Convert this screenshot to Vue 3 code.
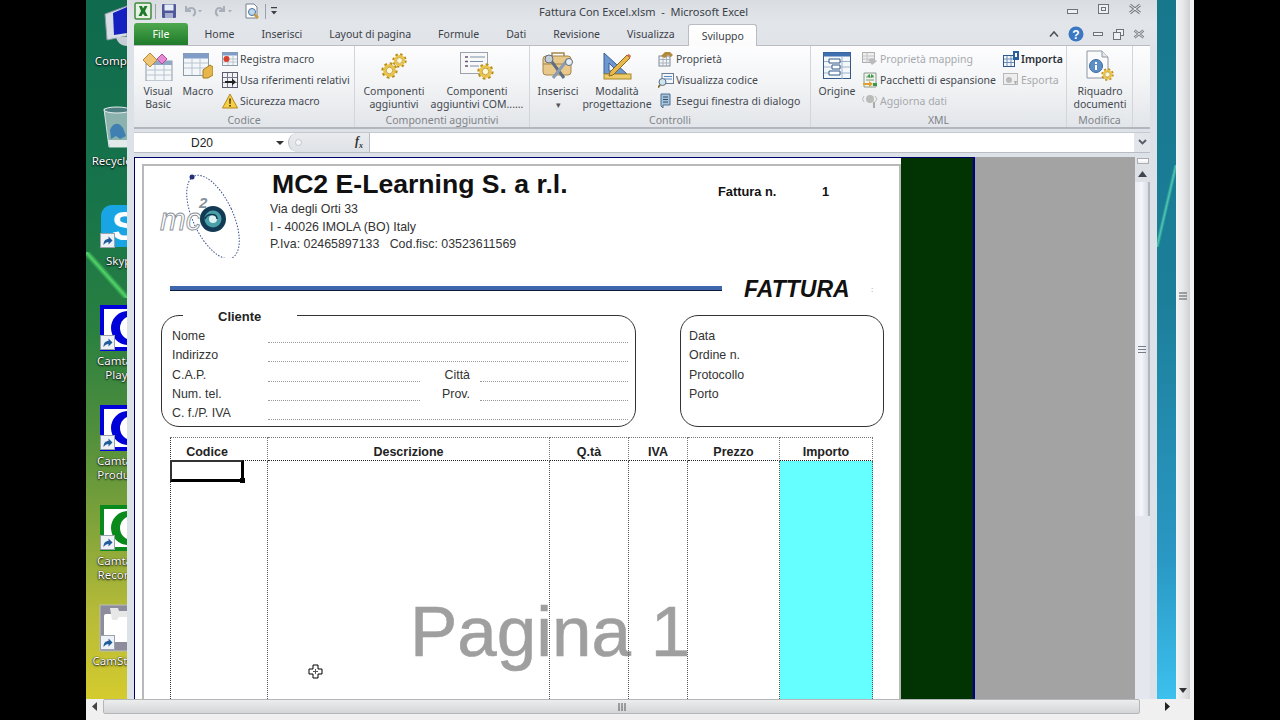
<script setup>
const deskIcons = [
  { kind: 'computer', label: 'Computer' },
  { kind: 'bin', label: 'Recycle Bin' },
  { kind: 'skype', label: 'Skype' },
  { kind: 'camtasia', label: 'Camtasia Player', a: '#0000d8', b: '#0000d8', c: '#c03020' },
  { kind: 'camtasia', label: 'Camtasia Producer', a: '#0000d8', b: '#0000d8', c: '#0000d8' },
  { kind: 'camtasia', label: 'Camtasia Recorder', a: '#0a8a1c', b: '#0a8a1c', c: '#0a8a1c' },
  { kind: 'studio', label: 'CamStudio' },
]

const docTitle = 'Fattura Con Excel.xlsm  -  Microsoft Excel'
const taxLine = 'P.Iva: 02465897133   Cod.fisc: 03523611569'

const tabs = ['Home', 'Inserisci', 'Layout di pagina', 'Formule', 'Dati', 'Revisione', 'Visualizza']

const columns = ['Codice', 'Descrizione', 'Q.tà', 'IVA', 'Prezzo', 'Importo']

const sideLabels = ['Data', 'Ordine n.', 'Protocollo', 'Porto']
</script>

<template>
  <div class="screen">
    <svg class="defs">
      <symbol id="gear" viewBox="0 0 24 24">
        <circle cx="12" cy="12" r="9.5" fill="none" stroke="#b98d1c" stroke-width="4" stroke-dasharray="3.7 3.75" />
        <circle cx="12" cy="12" r="7" fill="none" stroke="#e9c448" stroke-width="4" />
        <circle cx="12" cy="12" r="4.6" fill="#fff8d8" stroke="#a98317" stroke-width="1" />
      </symbol>
      <symbol id="shortcut" viewBox="0 0 15 15">
        <rect x=".5" y=".5" width="14" height="14" fill="#eef2f6" stroke="#9aa3ad" />
        <path d="M3.5 12c0-4 2-6 5-6V3.5l4 4-4 4V9c-2 0-3.500 1-5 3z" fill="#1f5c9c" />
      </symbol>
    </svg>

    <div class="monitor">
      <div class="top">
        <div class="desk-left">
          <div class="desk-col">
            <div v-for="icon in deskIcons" :key="icon.label" class="desk-item">
              <svg class="desk-icon" width="48" height="48" viewBox="0 0 48 48">
                <template v-if="icon.kind === 'computer'">
                  <path d="M6 10 28 2v30L8 36z" fill="#d6dde4" stroke="#8b98a6" />
                  <path d="M14 9 28 3v26L15 31z" fill="#1420c0" />
                  <path d="M17 33h11v9c-6 0-10-4-11-9z" fill="#c7ced6" />
                </template>
                <template v-else-if="icon.kind === 'bin'">
                  <path d="M5 5h26l-3 38H10z" fill="#a9c3c4" fill-opacity=".8" stroke="#d8e6e6" />
                  <ellipse cx="18" cy="6" rx="13" ry="3" fill="#4d7f80" stroke="#e4eeee" />
                  <path d="M11 26c3-8 9-8 13-2l3 8-6 3-4-3-5 3z" fill="#3f7fb2" />
                  <path d="M9 36h20l-1 7H11z" fill="#e2eaea" />
                </template>
                <template v-else-if="icon.kind === 'skype'">
                  <rect x="2" y="1" width="46" height="42" rx="11" fill="#19a5e4" />
                  <text x="26" y="36" font-family="Liberation Sans" font-weight="700" font-size="40" text-anchor="middle" fill="#fff">S</text>
                  <use href="#shortcut" x="1" y="29" width="15" height="15" />
                </template>
                <template v-else-if="icon.kind === 'camtasia'">
                  <rect x="1" y="1" width="46" height="46" :fill="icon.a" />
                  <rect x="5" y="5" width="42" height="38" fill="#fff" />
                  <circle cx="29" cy="24" r="17" :fill="icon.b" />
                  <circle cx="33" cy="24" r="12" fill="#fff" />
                  <circle cx="38" cy="25" r="9" :fill="icon.c" />
                  <use href="#shortcut" x="1" y="31" width="15" height="15" />
                </template>
                <template v-else>
                  <rect x="1" y="1" width="46" height="46" fill="#8c8c9c" stroke="#bbb" />
                  <rect x="5" y="10" width="42" height="28" rx="2" fill="#fff" />
                  <path d="M11 4h8l1 3h8v6h-8l-2 3h-5l-1-6z" fill="#e7e7e7" />
                  <use href="#shortcut" x="1" y="31" width="15" height="15" />
                </template>
              </svg>
              <div class="desk-label">{{ icon.label }}</div>
            </div>
          </div>
        </div>

        <div class="excel">
          <div class="titlebar">
            <div class="qat">
              <svg width="18" height="18" viewBox="0 0 18 18">
                <rect x="1" y="1" width="16" height="16" rx="1.500" fill="#e8f2e4" stroke="#3d8a3b" stroke-width="1.500" />
                <path d="M5 4h3l1 2.500L10.500 4h3L11 9l2.700 5h-3L9 11.500 7.500 14h-3L7 9z" fill="#1f7a2a" />
              </svg>
              <span class="qat-sep sep-a"></span>
              <svg class="q-save" width="16" height="16" viewBox="0 0 16 16">
                <rect x="1" y="1" width="14" height="14" rx="1" fill="#50589a" />
                <rect x="3.500" y="1.500" width="9" height="6" fill="#e4ecf6" />
                <rect x="4" y="10" width="8" height="5" fill="#a6aed0" />
              </svg>
              <svg class="q-undo" width="20" height="16" viewBox="0 0 20 16">
                <path d="M3 3v5h5M3.500 8C6 4 11 4 12 8c.5 2-.5 4-2 5" fill="none" stroke="#a9afb8" stroke-width="2" />
                <path d="M15 7h4l-2 2.500z" fill="#a9afb8" />
              </svg>
              <svg class="q-redo" width="20" height="16" viewBox="0 0 20 16">
                <path d="M11 3v5H6M10.500 8C8 4 4 4 3 8c-.5 2 .5 4 2 5" fill="none" stroke="#a9afb8" stroke-width="2" />
                <path d="M15 7h4l-2 2.500z" fill="#a9afb8" />
              </svg>
              <svg class="q-view" width="16" height="17" viewBox="0 0 16 17">
                <path d="M2 1h8l3 3v11H2z" fill="#fff" stroke="#76808c" />
                <circle cx="8" cy="9" r="3.500" fill="#bcd8ef" stroke="#4a6f96" />
                <path d="m10.500 11.500 3.500 3.500" stroke="#c79a3a" stroke-width="2.500" />
              </svg>
              <span class="qat-sep sep-b"></span>
              <svg class="q-more" width="6" height="10" viewBox="0 0 6 10">
                <path d="M0 1h6v1.200H0zM0 5h6L3 8.500z" fill="#3c4148" />
              </svg>
            </div>
            <div class="doc-title">{{ docTitle }}</div>
            <div class="win-btns">
              <svg width="14" height="12" viewBox="0 0 14 12"><rect x="1.500" y="6.500" width="10" height="4" fill="#eef0f3" stroke="#6d737b" /></svg>
              <svg width="14" height="12" viewBox="0 0 14 12"><rect x="1.500" y="1.500" width="10" height="9" fill="#eef0f3" stroke="#6d737b" /><rect x="4.500" y="4.500" width="4" height="3" fill="none" stroke="#6d737b" /></svg>
              <svg width="14" height="12" viewBox="0 0 14 12"><path d="m2 2 10 8M12 2 2 10" stroke="#7a8088" stroke-width="3" /><path d="m2 2 10 8M12 2 2 10" stroke="#f2f3f5" stroke-width="1" /></svg>
            </div>
          </div>

          <div class="tabbar">
            <div class="tab-file">File</div>
            <div v-for="tab in tabs" :key="tab" class="tab">{{ tab }}</div>
            <div class="tab tab-active">Sviluppo</div>
            <div class="tab-btns">
              <svg width="10" height="8" viewBox="0 0 10 8"><path d="M1 6.500 5 2l4 4.500" fill="none" stroke="#4c5158" stroke-width="1.500" /></svg>
              <svg width="16" height="16" viewBox="0 0 16 16">
                <circle cx="8" cy="8" r="7.500" fill="#3b78c4" />
                <text x="8" y="12.500" font-family="Liberation Sans" font-weight="700" font-size="12" text-anchor="middle" fill="#fff">?</text>
              </svg>
              <svg width="11" height="8" viewBox="0 0 11 8"><rect x=".5" y="2.500" width="9" height="3" fill="#eef0f3" stroke="#6d737b" /></svg>
              <svg width="11" height="11" viewBox="0 0 11 11"><rect x="3.500" y=".5" width="7" height="6" fill="#eef0f3" stroke="#6d737b" /><rect x=".5" y="3.500" width="7" height="7" fill="#eef0f3" stroke="#6d737b" /></svg>
              <svg width="12" height="10" viewBox="0 0 12 10"><path d="m1.500 1.500 9 7M10.500 1.500l-9 7" stroke="#7a8088" stroke-width="2.600" /><path d="m1.500 1.500 9 7M10.500 1.500l-9 7" stroke="#f2f3f5" stroke-width=".8" /></svg>
            </div>
          </div>

          <div class="ribbon">
            <section class="group g-codice">
              <div class="group-body">
                <div class="big vb">
                  <div class="big-icon">
                    <svg width="32" height="30" viewBox="0 0 32 30">
                      <rect x="4" y="10" width="26" height="20" fill="#f4f7fa" stroke="#8d9aa8" />
                      <rect x="4" y="10" width="26" height="4" fill="#8fa7c4" />
                      <path d="M4 19h26M4 24h26M13 14v16M22 14v16" stroke="#b9c4d0" />
                      <path d="m1 9 7-7 7 7-7 7z" fill="#eec675" stroke="#b68a33" />
                      <path d="m15 8 5-5 5 5-5 5z" fill="#e689d6" stroke="#a94f9c" />
                    </svg>
                  </div>
                  <div class="big-text">Visual<br />Basic</div>
                </div>
                <div class="big macro">
                  <div class="big-icon">
                    <svg width="30" height="26" viewBox="0 0 30 26">
                      <rect x=".5" y=".5" width="25" height="22" fill="#f4f7fa" stroke="#8d9aa8" />
                      <rect x=".5" y=".5" width="25" height="5" fill="#7f9dc6" />
                      <path d="M1 10h24M1 15h24M9 6v16M17 6v16" stroke="#b9c4d0" />
                      <path d="M20 25V17l7-5 3 2v8l-5 3z" fill="#e6b64a" stroke="#a67d20" />
                    </svg>
                  </div>
                  <div class="big-text">Macro</div>
                </div>
                <div class="small-col col-codice">
                  <div class="small">
                    <svg width="16" height="16" viewBox="0 0 16 16">
                      <rect x=".5" y="1.500" width="15" height="13" fill="#f4f7fa" stroke="#8d9aa8" />
                      <rect x=".5" y="1.500" width="15" height="3" fill="#7f9dc6" />
                      <path d="M1 8h14M1 11h14M6 5v9M11 5v9" stroke="#b9c4d0" />
                      <circle cx="4.500" cy="8" r="3" fill="#d8402c" />
                    </svg>
                    <span>Registra macro</span>
                  </div>
                  <div class="small">
                    <svg width="16" height="16" viewBox="0 0 16 16">
                      <rect x=".5" y=".5" width="15" height="15" fill="#f2f2f6" stroke="#5a5a68" />
                      <path d="M1 5.500h14M1 10.500h14M5.500 1v14M10.500 1v14" stroke="#77778a" />
                      <path d="M3 9h7V6.500L14 10l-4 3.500V11H3z" fill="#222" />
                    </svg>
                    <span>Usa riferimenti relativi</span>
                  </div>
                  <div class="small">
                    <svg width="16" height="16" viewBox="0 0 16 16">
                      <path d="M8 1 15.500 15H.5z" fill="#f5cf45" stroke="#b5891c" />
                      <path d="M7.200 5.500h1.600l-.3 5.500h-1zM7.200 12h1.600v1.500H7.200z" fill="#3a2c08" />
                    </svg>
                    <span>Sicurezza macro</span>
                  </div>
                </div>
              </div>
              <div class="group-label">Codice</div>
            </section>

            <section class="group g-comp">
              <div class="group-body">
                <div class="big comp1">
                  <div class="big-icon">
                    <svg width="26" height="26" viewBox="0 0 26 26">
                      <use href="#gear" x="0" y="9" width="17" height="17" />
                      <use href="#gear" x="11" y="0" width="15" height="15" />
                    </svg>
                  </div>
                  <div class="big-text">Componenti<br />aggiuntivi</div>
                </div>
                <div class="big comp2">
                  <div class="big-icon">
                    <svg width="34" height="28" viewBox="0 0 34 28">
                      <rect x=".5" y=".5" width="27" height="21" fill="#f8f8f8" stroke="#9aa3ad" />
                      <path d="M5 5h3M5 9.500h3M5 14h3" stroke="#657" stroke-width="1.500" />
                      <path d="M10 5h15M10 9.500h13M10 14h9" stroke="#7890a8" />
                      <use href="#gear" x="17" y="11" width="17" height="17" />
                    </svg>
                  </div>
                  <div class="big-text">Componenti<br />aggiuntivi COM......</div>
                </div>
              </div>
              <div class="group-label">Componenti aggiuntivi</div>
            </section>

            <section class="group g-ctrl">
              <div class="group-body">
                <div class="big ins">
                  <div class="big-icon">
                    <svg width="32" height="30" viewBox="0 0 32 30">
                      <path d="M10 6V2h12v4" fill="none" stroke="#a8854c" stroke-width="1.500" />
                      <rect x="1" y="5" width="28" height="19" rx="3" fill="#e8c98a" stroke="#a8854c" />
                      <path d="M1 13h28" stroke="#a8854c" />
                      <path d="m7 7 15 20" stroke="#5f6e82" stroke-width="3" />
                      <path d="M26 8 11 27" stroke="#8b9cb2" stroke-width="3" />
                      <circle cx="7" cy="8" r="4" fill="#c4ced9" stroke="#5f6e82" />
                      <circle cx="27" cy="11" r="3.500" fill="#e8edf2" stroke="#5f6e82" />
                    </svg>
                  </div>
                  <div class="big-text">Inserisci<br /><span class="drop">▾</span></div>
                </div>
                <div class="big mode">
                  <div class="big-icon">
                    <svg width="30" height="28" viewBox="0 0 30 28">
                      <path d="M2 1v21h23z" fill="#6d97d0" stroke="#3a5f94" />
                      <path d="M7 11v8h8z" fill="#eaf1f9" stroke="#3a5f94" />
                      <rect x="2" y="22" width="27" height="5" fill="#eccb68" stroke="#a9862b" />
                      <path d="M8 20 25 3l3 3-17 17-4 1z" fill="#e8b84c" stroke="#8a6a1c" />
                      <path d="m25 3 3 3 1-2-2-2z" fill="#d76a5a" />
                    </svg>
                  </div>
                  <div class="big-text">Modalità<br />progettazione</div>
                </div>
                <div class="small-col col-ctrl">
                  <div class="small">
                    <svg width="16" height="16" viewBox="0 0 16 16">
                      <rect x="1" y="5" width="11" height="10" fill="#f3f5f8" stroke="#7c8794" />
                      <path d="M1 8.500h11M1 12h11M5 5v10M8.500 5v10" stroke="#aab3bd" />
                      <path d="m3 5 4-4h5l3 3-2 2-3-2-3 3z" fill="#b08a3c" />
                    </svg>
                    <span>Proprietà</span>
                  </div>
                  <div class="small">
                    <svg width="16" height="16" viewBox="0 0 16 16">
                      <rect x="4" y="1.500" width="11.500" height="10" fill="#f3f6fa" stroke="#6a7b90" />
                      <path d="M6 4.500h8M6 7h8" stroke="#5a88bd" />
                      <circle cx="4.500" cy="10" r="3.500" fill="#cfe4f3" stroke="#5d6d7e" />
                      <path d="m2 13-2 2.500" stroke="#8a6a2c" stroke-width="2" />
                    </svg>
                    <span>Visualizza codice</span>
                  </div>
                  <div class="small">
                    <svg width="16" height="16" viewBox="0 0 16 16">
                      <path d="M3 1h9v11H5v3L3 13z" fill="#a8c4dc" stroke="#4f6f8f" />
                      <path d="M5 4h5M5 6.500h5M5 9h5" stroke="#2f4f6f" />
                    </svg>
                    <span>Esegui finestra di dialogo</span>
                  </div>
                </div>
              </div>
              <div class="group-label">Controlli</div>
            </section>

            <section class="group g-xml">
              <div class="group-body">
                <div class="big orig">
                  <div class="big-icon">
                    <svg width="28" height="28" viewBox="0 0 28 28">
                      <rect x=".5" y=".5" width="27" height="26" fill="#f4f7fa" stroke="#33588a" />
                      <rect x=".5" y=".5" width="27" height="4" fill="#3f6fb0" />
                      <path d="M1 9.500h26M1 15h26M1 21h26M19 5v22" stroke="#9fb2c8" />
                      <path d="M6 7h11v4H6zM9 13h8v4H9zM6 19h11v4H6z" fill="#fff" stroke="#33588a" />
                    </svg>
                  </div>
                  <div class="big-text">Origine</div>
                </div>
                <div class="small-col col-xml1">
                  <div class="small off">
                    <svg width="16" height="16" viewBox="0 0 16 16">
                      <rect x=".5" y="1.500" width="12" height="10" fill="#eee" stroke="#b0b0b0" />
                      <path d="M1 5h11M1 8h11M5 2v9" stroke="#c4c4c4" />
                      <path d="m6 9 4-2 5 3-5 4z" fill="#bbb" />
                    </svg>
                    <span>Proprietà mapping</span>
                  </div>
                  <div class="small">
                    <svg width="16" height="16" viewBox="0 0 16 16">
                      <path d="M2 1h12v14H2z" fill="#f0f3f0" stroke="#8a9a8a" />
                      <path d="M4 5h8M4 8h8" stroke="#7a9a7a" />
                      <path d="M8 2 5 4l3 2zM9 2l3 2-3 2z" fill="#3a9a4a" />
                      <path d="M1 11h6V9l4 3-4 3v-2H1z" fill="#e0a030" />
                      <path d="M15 11h-4v3h4z" fill="#3a9a4a" />
                    </svg>
                    <span>Pacchetti di espansione</span>
                  </div>
                  <div class="small off">
                    <svg width="16" height="16" viewBox="0 0 16 16">
                      <circle cx="8" cy="6" r="4" fill="#bbb" />
                      <path d="M2 3 .5 6 2 9M13 3l2 3-2 3" fill="none" stroke="#bbb" />
                      <path d="M12 9v6" stroke="#aaa" stroke-width="2" />
                    </svg>
                    <span>Aggiorna dati</span>
                  </div>
                </div>
                <div class="small-col col-xml2">
                  <div class="small strong">
                    <svg width="16" height="16" viewBox="0 0 16 16">
                      <rect x=".5" y="4.500" width="11" height="11" fill="#f4f7fa" stroke="#33588a" />
                      <path d="M1 8h10M1 11.500h10M4 5v10M8 5v10" stroke="#6f8fb5" />
                      <rect x="10" y="0" width="6" height="9" fill="#2a5f9c" />
                      <path d="M12 2h2v4h-2z" fill="#fff" />
                    </svg>
                    <span>Importa</span>
                  </div>
                  <div class="small off">
                    <svg width="16" height="16" viewBox="0 0 16 16">
                      <rect x=".5" y="1.500" width="14" height="11" fill="#eee" stroke="#b8b8b8" />
                      <circle cx="6" cy="8" r="3" fill="#bbb" />
                      <path d="M11 9h3l-1.500 4z" fill="#aaa" />
                    </svg>
                    <span>Esporta</span>
                  </div>
                </div>
              </div>
              <div class="group-label">XML</div>
            </section>

            <section class="group g-mod">
              <div class="group-body">
                <div class="big doc">
                  <div class="big-icon">
                    <svg width="30" height="31" viewBox="0 0 30 31">
                      <path d="M2 1h15l6 6v21H2z" fill="#fbfbfc" stroke="#8d97a3" />
                      <path d="M17 1v6h6" fill="#e6e9ee" stroke="#8d97a3" />
                      <circle cx="11" cy="16" r="6.500" fill="#5d8ec6" stroke="#3c6aa0" />
                      <path d="M10 12h2v2h-2zM10 15h2v5h-2z" fill="#fff" />
                      <use href="#gear" x="16" y="18" width="13" height="13" />
                    </svg>
                  </div>
                  <div class="big-text">Riquadro<br />documenti</div>
                </div>
              </div>
              <div class="group-label">Modifica</div>
            </section>
          </div>

          <div class="formula">
            <div class="namebox">
              <span class="cell-ref">D20</span>
              <span class="name-arrow"></span>
            </div>
            <div class="fx-box">
              <span class="fx-dot"></span>
              <span class="fx">f<sub>x</sub></span>
            </div>
            <div class="formula-input"></div>
            <div class="formula-expand">
              <svg width="9" height="7" viewBox="0 0 9 7"><path d="m1 1 3.500 3.500L8 1" fill="none" stroke="#555c66" stroke-width="1.800" /></svg>
            </div>
          </div>

          <div class="sheet">
            <div class="work">
              <div class="paper">
                <div class="page">
                  <div class="head">
                    <svg class="logo" width="84" height="86" viewBox="0 0 84 86">
                      <ellipse cx="55" cy="45" rx="20" ry="45" transform="rotate(-25 55 45)" fill="none" stroke="#3a4f8a" stroke-dasharray="1.500 1.500" />
                      <circle cx="34" cy="5" r="2.500" fill="#20307a" />
                      <text x="2" y="58" font-family="Liberation Sans" font-style="italic" font-size="31" fill="#fff" stroke="#8a8f98" stroke-width=".9">mc</text>
                      <text x="41" y="36" font-family="Liberation Sans" font-weight="700" font-style="italic" font-size="15" fill="#87919e">2</text>
                      <circle cx="55" cy="47" r="13" fill="#123a54" />
                      <circle cx="55" cy="47" r="8.500" fill="#4aa0a8" />
                      <circle cx="55" cy="47" r="4" fill="#dff2f2" />
                      <path d="M47 47c2-6 12-6 12 0" fill="none" stroke="#123a54" stroke-width="1.500" />
                    </svg>
                    <div class="company">
                      <div class="company-name">MC2 E-Learning S. a r.l.</div>
                      <div class="company-line">Via degli Orti 33</div>
                      <div class="company-line">I - 40026 IMOLA (BO) Italy</div>
                      <div class="company-line">{{ taxLine }}</div>
                    </div>
                    <div class="invoice-no">
                      <span class="invoice-key">Fattura n.</span>
                      <span>1</span>
                    </div>
                  </div>

                  <div class="title-row">
                    <div class="rule"></div>
                    <div class="doc-kind">FATTURA</div>
                    <div class="mini-dots">:</div>
                  </div>

                  <div class="boxes">
                    <div class="box client">
                      <div class="legend">Cliente</div>
                      <div class="client-grid">
                        <span>Nome</span><span class="line wide"></span>
                        <span>Indirizzo</span><span class="line wide"></span>
                        <span>C.A.P.</span><span class="line"></span><span class="right">Città</span><span></span><span class="line"></span>
                        <span>Num. tel.</span><span class="line"></span><span class="right">Prov.</span><span></span><span class="line"></span>
                        <span>C. f./P. IVA</span><span class="line wide"></span>
                      </div>
                    </div>
                    <div class="box side">
                      <div v-for="label in sideLabels" :key="label" class="side-row">{{ label }}</div>
                    </div>
                  </div>

                  <div class="items">
                    <div class="items-head">
                      <div v-for="col in columns" :key="col" class="head-cell">{{ col }}</div>
                    </div>
                    <div class="items-body">
                      <div v-for="col in columns" :key="col" class="body-cell" :class="{ cyan: col === 'Importo' }"></div>
                    </div>
                    <div class="selected"><span class="handle"></span></div>
                  </div>

                  <div class="watermark">Pagina 1</div>
                  <svg class="cursor" width="15" height="15" viewBox="0 0 15 15">
                    <path d="M5 1h5v4h4v5h-4v4H5v-4H1V5h4z" fill="#fff" stroke="#000" />
                    <path d="M7.500 5v5M5 7.500h5" stroke="#555" />
                  </svg>
                </div>
              </div>
              <div class="band-green"></div>
              <div class="band-navy"></div>
            </div>
            <div class="vscroll">
              <div class="split"><span></span></div>
              <div class="up">
                <svg width="9" height="6" viewBox="0 0 9 6"><path d="M0 6h9L4.500 0z" fill="#3f4650" /></svg>
              </div>
              <div class="v-thumb">
                <svg width="8" height="7" viewBox="0 0 8 7"><path d="M0 .5h8M0 3.500h8M0 6.500h8" stroke="#777e88" /></svg>
              </div>
            </div>
          </div>
        </div>

        <div class="desk-right"></div>

        <div class="outer-scroll">
          <div class="outer-thumb">
            <svg width="8" height="9" viewBox="0 0 8 9"><path d="M0 1h8M0 4h8M0 7h8" stroke="#555" /></svg>
          </div>
          <svg class="outer-down" width="8" height="5" viewBox="0 0 8 5"><path d="M0 0h8L4 5z" fill="#333" /></svg>
        </div>
      </div>

      <div class="hbar">
        <div class="hscroll">
          <svg width="5" height="9" viewBox="0 0 5 9"><path d="M5 0v9L0 4.500z" fill="#444" /></svg>
          <div class="h-thumb">
            <svg width="8" height="8" viewBox="0 0 8 8"><path d="M1 0v8M4 0v8M7 0v8" stroke="#555" /></svg>
          </div>
          <svg class="h-right" width="5" height="9" viewBox="0 0 5 9"><path d="M0 0v9l5-4.500z" fill="#222" /></svg>
        </div>
      </div>
    </div>
  </div>
</template>

<style>
html,
body {
  margin: 0;
  background: #000;
  overflow: hidden;
}
</style>

<style scoped>
.screen {
  width: 1280px;
  height: 720px;
  padding: 0 86px;
  box-sizing: border-box;
  background: #000;
  overflow: hidden;
  font-family: "Noto Sans", "Liberation Sans", sans-serif;
}
.defs {
  display: block;
  width: 0;
  height: 0;
}
.monitor {
  width: 1108px;
  height: 720px;
  display: flex;
  flex-direction: column;
}
.top {
  display: flex;
  height: 699px;
}

/* desktop */
.desk-left {
  width: 41px;
  overflow: hidden;
  background:
    linear-gradient(to top right, transparent 44%, rgba(90, 230, 110, .85) 50%, transparent 56%) 0 252px / 41px 46px no-repeat,
    linear-gradient(#0f6a4e 0, #17744a 200px, #2a8040 330px, #4f8e3c 430px, #7da23a 520px, #b5ba38 610px, #d4cb2e 699px);
}
.desk-col {
  width: 72px;
}
.desk-item {
  height: 96px;
  padding-top: 4px;
  text-align: center;
}
.desk-icon {
  display: block;
  margin-left: 13px;
}
.desk-label {
  margin-top: 2px;
  font-size: 11.5px;
  line-height: 14px;
  color: #fff;
  text-shadow: 0 1px 2px #000, 0 0 1px #000;
}
.desk-right {
  width: 19px;
  background:
    linear-gradient(to top left, transparent 44%, rgba(90, 220, 180, .8) 50%, transparent 56%) 0 165px / 19px 82px no-repeat,
    linear-gradient(#17788c 0, #1c7f9a 300px, #2a98c4 560px, #3cc0ee 699px);
}
.outer-scroll {
  width: 14px;
  padding-right: 4px;
  background: linear-gradient(90deg, #f4f5f6 0, #e6e7e9 7px, #cfd1d3 14px, #f2f2f2 14px);
  display: flex;
  flex-direction: column;
  align-items: center;
}
.outer-thumb {
  height: 592px;
  display: flex;
  align-items: center;
  justify-content: center;
}
.outer-down {
  margin-top: 96px;
}

/* bottom scroll bar */
.hbar {
  height: 21px;
  background: #f0f0f1;
}
.hscroll {
  height: 15px;
  display: flex;
  align-items: center;
  padding-left: 6px;
  box-sizing: border-box;
}
.h-thumb {
  width: 1037px;
  height: 15px;
  margin-left: 6px;
  box-sizing: border-box;
  background: linear-gradient(#eceded, #d4d5d7);
  border: 1px solid #b4b6b9;
  border-radius: 2px;
  display: flex;
  align-items: center;
  justify-content: center;
}
.h-right {
  margin-left: 25px;
}

/* excel window */
.excel {
  width: 1016px;
  padding: 0 7px;
  background: #dde2e8;
  display: flex;
  flex-direction: column;
}
.titlebar {
  height: 22px;
  display: flex;
  align-items: center;
  background: linear-gradient(#d9dde2, #e2e5e9);
  margin: 0 -7px;
  padding: 0 7px;
}
.qat {
  width: 405px;
  display: flex;
  align-items: center;
  box-sizing: border-box;
}
.qat-sep {
  width: 1px;
  height: 15px;
  background: #9aa0a8;
}
.sep-a { margin-left: 3px; }
.q-save { margin-left: 5px; }
.q-undo { margin-left: 6px; }
.q-redo { margin-left: 10px; }
.q-view { margin-left: 11px; }
.sep-b { margin-left: 5px; }
.q-more { margin-left: 5px; }
.doc-title {
  font-size: 11px;
  color: #3a3f46;
  white-space: pre;
}
.win-btns {
  margin-left: auto;
  display: flex;
  gap: 17px;
  padding: 0 8px 4px 0;
}
.tabbar {
  height: 23px;
  display: flex;
  align-items: flex-end;
  background: linear-gradient(#e2e5e9, #e0e3e7);
  margin: 0 -7px;
  padding: 0 7px;
  font-size: 10.5px;
  color: #3c4148;
}
.tab-file {
  width: 54px;
  height: 22px;
  margin-right: 3px;
  border-radius: 3px 3px 0 0;
  background: linear-gradient(#4ea84f, #1f7a2a);
  color: #fff;
  font-size: 10.5px;
  line-height: 22px;
  text-align: center;
}
.tab {
  height: 22px;
  padding: 0 13.5px;
  line-height: 22px;
}
.tab-active {
  margin-left: 0;
  background: linear-gradient(#fff, #fbfbfc);
  border: 1px solid #b9bdc3;
  border-bottom: 0;
  border-radius: 3px 3px 0 0;
  box-sizing: border-box;
  padding: 0 12.5px;
  position: relative;
  top: 1px;
}
.tab-btns {
  margin-left: auto;
  height: 22px;
  display: flex;
  align-items: center;
  gap: 9px;
  padding-right: 5px;
}
.ribbon {
  height: 84px;
  box-sizing: border-box;
  display: flex;
  background: linear-gradient(#fdfdfe 0, #f3f4f6 45%, #e2e5e9 100%);
  border-top: 1px solid #b9bdc3;
  border-bottom: 2px solid #b3b7bd;
  font-size: 10.5px;
  color: #444950;
}
.group {
  box-sizing: border-box;
  border-right: 1px solid #d2d5da;
  display: flex;
  flex-direction: column;
}
.g-codice { width: 221px; }
.g-comp { width: 175px; }
.g-ctrl { width: 281px; }
.g-xml { width: 256px; }
.g-mod { width: 66px; }
.group-body {
  height: 66px;
  display: flex;
}
.group-label {
  height: 15px;
  line-height: 17px;
  text-align: center;
  color: #808489;
}
.big {
  text-align: center;
  flex: none;
}
.big-icon {
  height: 39px;
  display: flex;
  align-items: center;
  justify-content: center;
}
.big-icon svg {
  display: block;
}
.big-text {
  line-height: 13px;
  white-space: nowrap;
}
.drop {
  font-size: 9px;
  color: #555;
}
.vb { width: 34px; margin-left: 7px; }
.macro { width: 32px; margin-left: 7px; }
.comp1 { width: 66px; margin-left: 6px; }
.comp2 { width: 96px; margin-left: 2px; }
.ins { width: 44px; margin-left: 6px; }
.mode { width: 72px; margin-left: 1px; }
.orig { width: 40px; margin-left: 6px; }
.doc { width: 66px; }
.small-col {
  padding-top: 2px;
  flex: none;
}
.col-codice { margin-left: 8px; }
.col-ctrl { margin-left: 5px; }
.col-xml1 { width: 141px; margin-left: 5px; }
.col-xml2 { margin-left: 0; }
.small {
  height: 21px;
  display: flex;
  align-items: center;
  gap: 2px;
  white-space: nowrap;
}
.off {
  color: #a6a9ad;
}
.strong {
  color: #2c3036;
  font-weight: 600;
}

/* formula bar */
.formula {
  height: 21px;
  margin-top: 3px;
  display: flex;
  background: #fff;
  box-sizing: border-box;
  border-top: 1px solid #c6cad0;
  border-bottom: 1px solid #b9bdc3;
}
.namebox {
  width: 154px;
  position: relative;
  font-family: "Liberation Sans", sans-serif;
  font-size: 12px;
  line-height: 21px;
  padding-left: 57px;
  box-sizing: border-box;
  color: #222;
}
.name-arrow {
  position: absolute;
  left: 142px;
  top: 8px;
  border: 4px solid transparent;
  border-top: 4px solid #333;
  border-bottom: 0;
}
.fx-box {
  width: 82px;
  background: linear-gradient(#e9ebee, #dfe2e6);
  border-radius: 10px 0 0 10px;
  border-left: 1px solid #b9bdc3;
  border-right: 1px solid #b9bdc3;
  box-sizing: border-box;
  display: flex;
  align-items: center;
  justify-content: space-between;
  padding: 0 6px 0 6px;
}
.fx-dot {
  width: 5px;
  height: 5px;
  border-radius: 50%;
  background: #f5f6f7;
  border: 1px solid #c2c6cb;
}
.fx {
  font-family: "Liberation Serif", serif;
  font-style: italic;
  font-weight: 700;
  font-size: 12px;
  color: #333;
}
.fx sub {
  font-size: 8px;
}
.formula-input {
  flex: 1;
}
.formula-expand {
  width: 16px;
  background: #e2e5e9;
  display: flex;
  align-items: center;
  justify-content: center;
}

/* sheet */
.sheet {
  height: 542px;
  margin-top: 4px;
  display: flex;
}
.work {
  width: 1001px;
  display: flex;
  background: #a3a3a3;
  border-left: 1px solid #00006a;
  box-sizing: border-box;
}
.paper {
  width: 766px;
  padding: 6px 0 0 7px;
  box-sizing: border-box;
  background: #fff;
  border-top: 1px solid #00006a;
}
.page {
  height: 535px;
  box-sizing: border-box;
  border-top: 2px solid #b7bab7;
  border-left: 2px solid #b7bab7;
  border-right: 2px solid #b7bab7;
  position: relative;
  overflow: hidden;
  font-family: "Liberation Sans", sans-serif;
  color: #222;
}
.head {
  height: 112px;
  display: flex;
  align-items: flex-start;
  padding-left: 14px;
}
.logo {
  margin-top: 6px;
  flex: none;
}
.company {
  width: 448px;
  margin-left: 28px;
  padding-top: 3px;
  flex: none;
}
.company-name {
  margin-left: 2px;
  font-size: 26.600px;
  line-height: 31px;
  font-weight: 700;
  color: #111;
  margin-bottom: 1px;
  white-space: nowrap;
}
.company-line {
  font-size: 12.400px;
  line-height: 17.500px;
  white-space: pre;
  color: #333;
}
.invoice-no {
  margin-top: 19px;
  font-size: 12.800px;
  font-weight: 700;
  line-height: 14px;
  color: #111;
  display: flex;
}
.invoice-key {
  width: 104px;
}
.title-row {
  height: 22px;
  display: flex;
  align-items: center;
  padding-left: 26px;
}
.rule {
  width: 552px;
  height: 4px;
  margin-top: -2px;
  background: #3f67ad;
  border-bottom: 1px solid #0d1c38;
}
.doc-kind {
  margin-left: 22px;
  font-size: 23px;
  font-weight: 700;
  font-style: italic;
  color: #111;
  width: 127px;
}
.mini-dots {
  font-size: 8px;
  color: #888;
}
.boxes {
  display: flex;
  margin-top: 15px;
  padding-left: 17px;
}
.box {
  height: 112px;
  box-sizing: border-box;
  border: 1px solid #333;
  border-radius: 18px;
  padding-top: 10px;
  font-size: 12.400px;
  color: #333;
  position: relative;
}
.client {
  width: 475px;
  padding-left: 10px;
}
.legend {
  position: absolute;
  left: 21px;
  top: -8px;
  width: 114px;
  padding-left: 35px;
  box-sizing: border-box;
  background: #fff;
  font-size: 13px;
  line-height: 17px;
  font-weight: 700;
  color: #222;
}
.client-grid {
  display: grid;
  grid-template-columns: 96px 152px 50px 10px 148px;
  grid-auto-rows: 19.250px;
  line-height: 21px;
}
.line {
  height: 17px;
  box-sizing: border-box;
  border-bottom: 1px dotted #999;
}
.wide {
  grid-column: 2 / -1;
}
.right {
  text-align: right;
}
.side {
  width: 204px;
  margin-left: 44px;
  padding-left: 8px;
}
.side-row {
  height: 19.250px;
  line-height: 21px;
}
.items {
  margin: 10px 0 0 26px;
  width: 703px;
  height: 262px;
  position: relative;
  z-index: 1;
  display: flex;
  flex-direction: column;
}
.items-head,
.items-body {
  display: grid;
  grid-template-columns: 98px 282px 79px 59px 92px 93px;
}
.items-head {
  height: 24px;
  flex: none;
}
.head-cell {
  box-sizing: border-box;
  border-top: 1px dotted #777;
  border-right: 1px dotted #777;
  border-bottom: 1px dotted #222;
  font-size: 12.500px;
  font-weight: 700;
  line-height: 15px;
  padding-top: 7px;
  text-align: center;
  color: #222;
}
.head-cell:first-child {
  padding-right: 24px;
}
.head-cell:first-child,
.body-cell:first-child {
  border-left: 1px dotted #333;
}
.items-body {
  flex: 1;
}
.body-cell {
  border-right: 1px dotted #555;
}
.cyan {
  background: #66ffff;
}
.selected {
  position: absolute;
  left: 0;
  top: 23px;
  width: 74px;
  height: 22px;
  box-sizing: border-box;
  border-top: 2px solid #333;
  border-left: 2px solid #333;
  border-right: 3px solid #000;
  border-bottom: 3px solid #000;
}
.handle {
  position: absolute;
  right: -4px;
  bottom: -4px;
  width: 5px;
  height: 5px;
  background: #000;
}
.watermark {
  position: absolute;
  left: 266px;
  top: 426px;
  font-size: 71px;
  line-height: 80px;
  color: #9f9f9f;
  -webkit-text-stroke: .6px #9f9f9f;
  white-space: nowrap;
}
.cursor {
  position: absolute;
  left: 164px;
  top: 498px;
  z-index: 2;
}
.band-green {
  width: 72px;
  background: #023302;
  border-top: 1px solid #00006a;
}
.band-navy {
  width: 2px;
  background: #00008a;
}

/* excel scroll bar */
.vscroll {
  width: 15px;
  background: #e4e7ee;
  display: flex;
  flex-direction: column;
}
.split {
  height: 8px;
  display: flex;
  align-items: center;
  justify-content: center;
  background: #dfe2e7;
}
.split span {
  width: 12px;
  height: 6px;
  background: linear-gradient(#fdfdfd, #fdfdfd 40%, #777 40%, #777 60%, #f2f2f4 60%);
  border: 1px solid #a8acb2;
  box-sizing: border-box;
}
.up {
  height: 17px;
  display: flex;
  align-items: center;
  justify-content: center;
  background: #dde1e6;
}
.v-thumb {
  height: 334px;
  box-sizing: border-box;
  background: linear-gradient(90deg, #e9ecf3, #f4f5fa 50%, #d9dce6);
  border-right: 2px solid #b2b6bd;
  display: flex;
  align-items: center;
  justify-content: center;
}
</style>
